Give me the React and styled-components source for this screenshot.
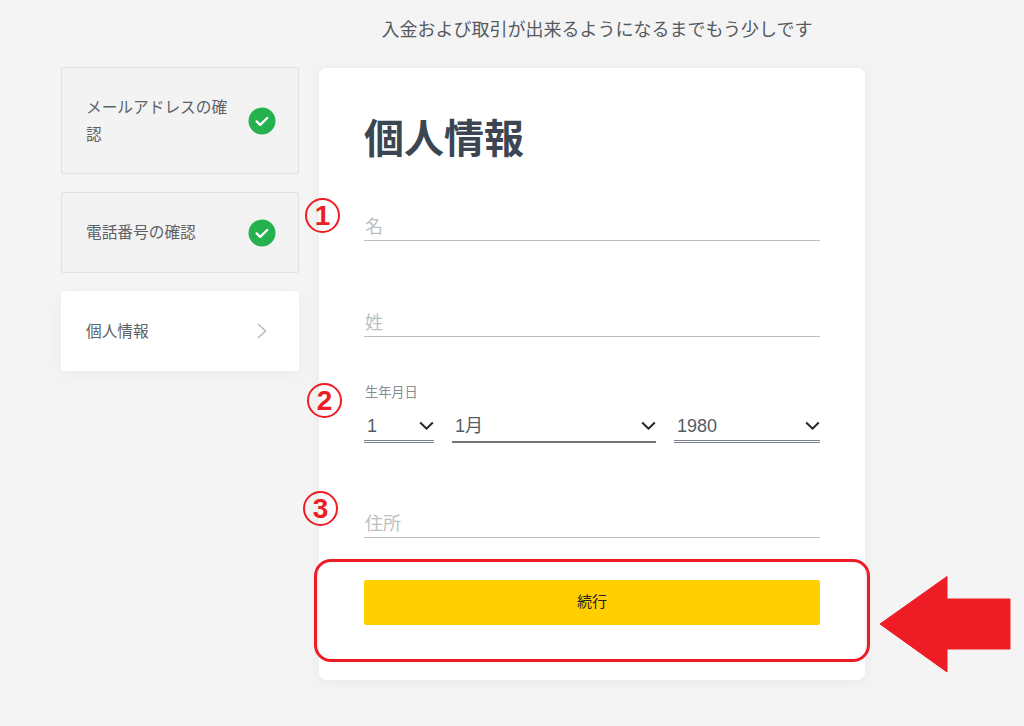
import React from 'react';
import styled, { createGlobalStyle } from 'styled-components';

const FONT = '"Liberation Sans", "Noto Sans CJK JP", sans-serif';
const RED = '#ee1c25';

const GlobalStyle = createGlobalStyle`
  html, body {
    margin: 0;
    padding: 0;
    background: #f4f4f4;
  }
  * {
    box-sizing: border-box;
  }
`;

const Page = styled.div`
  position: relative;
  width: 1024px;
  height: 726px;
  overflow: hidden;
  background: #f4f4f4;
  font-family: ${FONT};
`;

const Notice = styled.p`
  margin: 0 0 0 170px;
  height: 67px;
  padding-top: 19px;
  font-size: 18px;
  line-height: 22px;
  text-align: center;
  color: #555a5f;
`;

const Layout = styled.div`
  display: flex;
  align-items: flex-start;
  gap: 20px;
  padding-left: 61px;
`;

const Steps = styled.nav`
  display: flex;
  flex-direction: column;
  gap: 18px;
  width: 238px;
`;

const Step = styled.div`
  display: flex;
  align-items: center;
  justify-content: space-between;
  height: ${({ $height }) => $height}px;
  padding: 0 22px 0 24px;
  font-size: 15.7px;
  line-height: 27px;
  color: #5d6268;
  border-radius: 2px;
  background: ${({ $active }) => ($active ? '#fff' : '#f3f3f3')};
  border: 1px solid ${({ $active }) => ($active ? '#fff' : '#e2e2e2')};
  box-shadow: ${({ $active }) => ($active ? '0 4px 16px rgba(0, 0, 0, 0.04)' : 'none')};
`;

const StepLabel = styled.span`
  width: 148px;
`;

const Card = styled.main`
  width: 546px;
  height: 612px;
  margin-top: 1px;
  padding: 46px 45px 45px;
  border-radius: 8px;
  background: #fff;
  box-shadow: 0 2px 14px rgba(0, 0, 0, 0.05);
`;

const Title = styled.h1`
  margin: 0 0 47px;
  font-size: 40px;
  line-height: 50px;
  font-weight: 700;
  color: #3b4652;
`;

const TextInput = styled.input`
  display: block;
  width: 100%;
  height: 30px;
  margin-bottom: ${({ $gap }) => $gap}px;
  padding: 4px 0 0 1px;
  border: 0;
  border-bottom: 1px solid #bdbdbd;
  outline: none;
  background: transparent;
  font-family: ${FONT};
  font-size: 18px;

  &::placeholder {
    color: #bcbfc2;
    opacity: 1;
  }
`;

const DateLabel = styled.div`
  margin-bottom: 10px;
  padding: 1px 0 0 1px;
  font-size: 13.2px;
  line-height: 18px;
  color: #878c91;
`;

const DateRow = styled.div`
  display: flex;
  gap: 18px;
  margin-bottom: 65px;
`;

const DateSelect = styled.div`
  display: flex;
  align-items: center;
  justify-content: space-between;
  flex: 0 0 ${({ $width }) => $width}px;
  height: 31px;
  padding: 0 0 1px 3px;
  font-size: 18px;
  line-height: 24px;
  color: #555c66;
  border-bottom: ${({ $double }) => ($double ? '3px double #7c838a' : '2px solid #70757a')};
`;

const Submit = styled.button`
  display: block;
  width: 100%;
  height: 45px;
  margin-top: 42px;
  padding: 0 0 5px;
  border: 0;
  border-radius: 2px;
  background: #ffcf00;
  font-family: ${FONT};
  font-size: 15px;
  color: #222;
`;

const Marker = styled.span`
  position: absolute;
  left: ${({ $x }) => $x}px;
  top: ${({ $y }) => $y}px;
  display: flex;
  align-items: center;
  justify-content: center;
  width: 35px;
  height: 35px;
  border: 2px solid ${RED};
  border-radius: 50%;
  font-family: "Liberation Sans", sans-serif;
  font-size: 28px;
  font-weight: 700;
  line-height: 1;
  color: ${RED};
`;

const Highlight = styled.div`
  position: absolute;
  left: 314px;
  top: 559px;
  width: 556px;
  height: 103px;
  border: 3.5px solid ${RED};
  border-radius: 17px;
`;

const ArrowSvg = styled.svg`
  position: absolute;
  left: 878px;
  top: 575px;
`;

const NextIcon = styled.svg`
  margin-right: 8px;
`;

const Check = () => (
  <svg width="28" height="28" viewBox="0 0 28 28">
    <circle cx="14" cy="14" r="13.5" fill="#25b14d" />
    <path d="M8.6 14.4l3.6 3.4 7-6.8" fill="none" stroke="#fff" strokeWidth="2.4" strokeLinecap="round" strokeLinejoin="round" />
  </svg>
);

const NextChevron = () => (
  <NextIcon width="12" height="18" viewBox="0 0 12 18">
    <path d="M2 2l7.5 7L2 16" fill="none" stroke="#bdbdbd" strokeWidth="1.6" />
  </NextIcon>
);

const DownChevron = () => (
  <svg width="15" height="10" viewBox="0 0 15 10">
    <path d="M1.2 1.5l6.3 6.2 6.3-6.2" fill="none" stroke="#22262a" strokeWidth="2" />
  </svg>
);

export default function App() {
  return (
    <Page>
      <GlobalStyle />
      <Notice>入金および取引が出来るようになるまでもう少しです</Notice>
      <Layout>
        <Steps>
          <Step $height={107}>
            <StepLabel>メールアドレスの確認</StepLabel>
            <Check />
          </Step>
          <Step $height={81}>
            <StepLabel>電話番号の確認</StepLabel>
            <Check />
          </Step>
          <Step $height={80} $active>
            <StepLabel>個人情報</StepLabel>
            <NextChevron />
          </Step>
        </Steps>
        <Card>
          <Title>個人情報</Title>
          <TextInput placeholder="名" $gap={66} />
          <TextInput placeholder="姓" $gap={46} />
          <DateLabel>生年月日</DateLabel>
          <DateRow>
            <DateSelect $width={70} $double>1<DownChevron /></DateSelect>
            <DateSelect $width={204}>1月<DownChevron /></DateSelect>
            <DateSelect $width={146} $double>1980<DownChevron /></DateSelect>
          </DateRow>
          <TextInput placeholder="住所" $gap={0} />
          <Submit>続行</Submit>
        </Card>
      </Layout>
      <Marker $x={305} $y={198}>1</Marker>
      <Marker $x={307} $y={383}>2</Marker>
      <Marker $x={303} $y={491}>3</Marker>
      <Highlight />
      <ArrowSvg width="134" height="99" viewBox="0 0 134 99">
        <path d="M2 49L69 1.500V24H132V74H69V97Z" fill={RED} stroke={RED} strokeWidth="1" strokeLinejoin="round" />
      </ArrowSvg>
    </Page>
  );
}
